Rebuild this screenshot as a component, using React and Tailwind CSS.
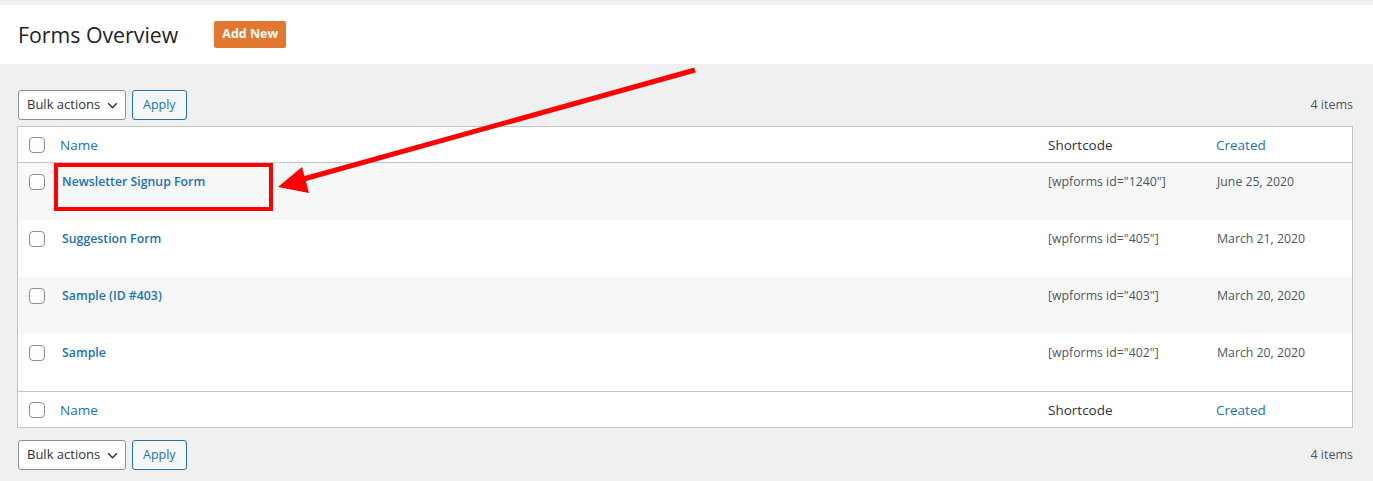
import React from 'react';

const forms = [
  { name: 'Newsletter Signup Form', code: '[wpforms id="1240"]', date: 'June 25, 2020' },
  { name: 'Suggestion Form', code: '[wpforms id="405"]', date: 'March 21, 2020' },
  { name: 'Sample (ID #403)', code: '[wpforms id="403"]', date: 'March 20, 2020' },
  { name: 'Sample', code: '[wpforms id="402"]', date: 'March 20, 2020' },
];

const font = { fontFamily: '"Open Sans", "Noto Sans", Arial, sans-serif' };

function Checkbox() {
  return <span className="block w-4 h-4 border border-[#8c8f94] rounded-[4px] bg-white" />;
}

function Toolbar() {
  return (
    <div className="flex items-center justify-between">
      <div className="flex items-center gap-[6px]">
        <div className="h-[30px] w-[108px] border border-[#8c8f94] rounded-[3px] bg-white flex items-center justify-between pl-[8px] pr-[6px] text-[13px] text-[#2c3338] whitespace-nowrap">
          <span>Bulk actions</span>
          <svg width="13" height="13" viewBox="0 0 12 12" fill="none" stroke="#2c3338" strokeWidth="1.4">
            <path d="M2 4l4 4 4-4" />
          </svg>
        </div>
        <div className="h-[30px] px-[10px] border border-[#2271b1] rounded-[3px] bg-[#f6f7f7] text-[#2271b1] text-[12.5px] flex items-center">
          Apply
        </div>
      </div>
      <span className="text-[12.5px] text-[#50575e]">4 items</span>
    </div>
  );
}

function HeadRow({ top }) {
  return (
    <div className={`grid grid-cols-[42px_1fr_168px_136px] items-center h-[36px] pt-[1px] ${top ? 'border-b' : 'border-t'} border-[#c3c4c7] text-[13.5px]`}>
      <div className="pl-[11px]"><Checkbox /></div>
      <div className="text-[#2271b1]">Name</div>
      <div className="text-[#2c3338]">Shortcode</div>
      <div className="text-[#2271b1]">Created</div>
    </div>
  );
}

export default function App() {
  return (
    <div className="bg-[#f0f0f1] min-h-screen pt-[5px] relative" style={font}>
      <div className="bg-white h-[59px] flex items-center pl-[18px] gap-[36px]">
        <h1 className="text-[21.3px] text-[#1d2327] font-normal m-0">Forms Overview</h1>
        <div className="bg-[#e27730] text-white text-[12.5px] font-bold h-[27px] w-[72px] rounded-[2px] flex items-center justify-center">
          Add New
        </div>
      </div>

      <div className="pl-[17px] pr-[20px]">
        <div className="pt-[26px] pl-[1px]"><Toolbar /></div>

        <div className="mt-[6px] border border-[#c3c4c7] bg-white">
          <HeadRow top />
          {forms.map((f, i) => (
            <div key={i} className={`grid grid-cols-[42px_1fr_168px_136px] h-[57px] pt-[10px] text-[12.3px] ${i % 2 === 0 ? 'bg-[#f6f7f7]' : 'bg-white'}`}>
              <div className="pl-[11px] pt-[1px]"><Checkbox /></div>
              <div className="pl-[2px] text-[#2271b1] font-semibold">{f.name}</div>
              <div className="text-[#50575e]">{f.code}</div>
              <div className="text-[#50575e] pl-[1px]">{f.date}</div>
            </div>
          ))}
          <HeadRow />
        </div>

        <div className="pt-[12px] pl-[1px]"><Toolbar /></div>
      </div>

      {/* annotation overlay */}
      <div className="absolute left-[54px] top-[163px] w-[219px] h-[48px] border-[4px] border-[#ff0000]" />
      <svg className="absolute left-0 top-0 pointer-events-none" width="1373" height="481">
        <line x1="695" y1="70" x2="300" y2="180" stroke="#ff0000" strokeWidth="5" />
        <polygon points="278,187 302,167 309,193" fill="#ff0000" />
      </svg>
    </div>
  );
}
